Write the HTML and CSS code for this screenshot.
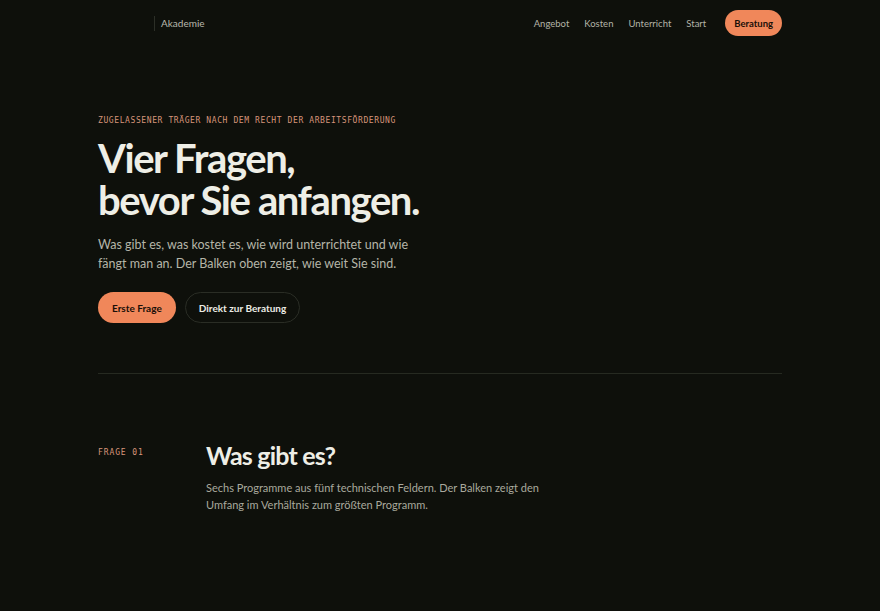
FILE: index.html
```html
<!DOCTYPE html>
<html lang="de">
<head>
<meta charset="utf-8">
<title>Akademie</title>
<link rel="stylesheet" href="styles.css">
</head>
<body>
<div class="page">
  <header class="nav">
    <div class="brand">
      <span class="brand-mark"></span>
      <span class="brand-sep"></span>
      <span class="brand-name">Akademie</span>
    </div>
    <nav class="links">
      <a href="#">Angebot</a>
      <a href="#">Kosten</a>
      <a href="#">Unterricht</a>
      <a href="#">Start</a>
      <a href="#" class="cta">Beratung</a>
    </nav>
  </header>

  <section class="hero">
    <p class="eyebrow">ZUGELASSENER TRÄGER NACH DEM RECHT DER ARBEITSFÖRDERUNG</p>
    <h1 class="title">Vier Fragen,<br>bevor Sie anfangen.</h1>
    <p class="lead">Was gibt es, was kostet es, wie wird unterrichtet und wie fängt man an. Der Balken oben zeigt, wie weit Sie sind.</p>
    <div class="actions">
      <a href="#" class="btn btn-primary">Erste Frage</a>
      <a href="#" class="btn btn-ghost">Direkt zur Beratung</a>
    </div>
  </section>

  <hr class="rule">

  <section class="question">
    <div class="q-label">FRAGE 01</div>
    <div class="q-body">
      <h2 class="q-title">Was gibt es?</h2>
      <p class="q-text">Sechs Programme aus fünf technischen Feldern. Der Balken zeigt den Umfang im Verhältnis zum größten Programm.</p>
    </div>
  </section>
</div>
</body>
</html>
```

FILE: styles.css
```css
* { box-sizing: border-box; }
html, body { margin: 0; padding: 0; }
body {
  background: #0e100b;
  color: #eeeee6;
  font-family: Lato, "Noto Sans", sans-serif;
  width: 880px;
  height: 611px;
  overflow: hidden;
}
a { text-decoration: none; color: inherit; }
.page {
  width: 684px;
  margin: 0 auto;
}
.nav {
  height: 46px;
  display: flex;
  align-items: center;
  justify-content: space-between;
}
.brand {
  display: flex;
  align-items: center;
}
.brand-mark {
  width: 56px;
  height: 14px;
}
.brand-sep {
  width: 1px;
  height: 15px;
  background: #2c2f27;
  margin-right: 6px;
}
.brand-name {
  font-size: 10px;
  font-weight: 400;
  color: #b9b9ad;
}
.links {
  display: flex;
  align-items: center;
  gap: 15px;
  font-size: 9.5px;
  color: #b3b3a7;
}
.links .cta {
  margin-left: 4px;
  background: #f0875a;
  color: #1a0f08;
  font-weight: 700;
  height: 26px;
  padding: 0 9px;
  border-radius: 13px;
  display: flex;
  align-items: center;
}
.hero {
  padding-top: 69px;
  padding-bottom: 50px;
}
.eyebrow {
  margin: 0;
  font-family: "DejaVu Sans Mono", "Liberation Mono", monospace;
  font-size: 8px;
  letter-spacing: 0.6px;
  color: #d7957a;
  line-height: 12px;
}
.title {
  margin: 10px 0 0;
  font-family: Lato, "Noto Sans", sans-serif;
  font-weight: 700;
  font-size: 40px;
  line-height: 42px;
  letter-spacing: -1.4px;
  color: #eeeee6;
}
.lead {
  margin: 14px 0 0;
  width: 315px;
  font-size: 12.5px;
  line-height: 19px;
  color: #b5b5a8;
}
.actions {
  margin-top: 19px;
  display: flex;
  gap: 9px;
}
.btn {
  height: 31px;
  border-radius: 16px;
  display: flex;
  align-items: center;
  font-size: 10px;
  font-weight: 700;
}
.btn-primary {
  background: #f0875a;
  color: #1a0f08;
  padding: 0 14px;
}
.btn-ghost {
  border: 1px solid #2a2d25;
  color: #ecece4;
  padding: 0 13px;
}
.rule {
  margin: 0;
  border: 0;
  height: 1px;
  background: #262a21;
}
.question {
  display: flex;
  padding-top: 65px;
}
.q-label {
  width: 108px;
  font-family: "DejaVu Sans Mono", "Liberation Mono", monospace;
  font-size: 8px;
  letter-spacing: 0.9px;
  color: #d7957a;
  padding-top: 9px;
}
.q-title {
  margin: 0;
  font-family: Lato, "Noto Sans", sans-serif;
  font-weight: 700;
  font-size: 25px;
  line-height: 32px;
  letter-spacing: -0.8px;
  color: #eeeee6;
}
.q-text {
  margin: 8px 0 0;
  width: 340px;
  font-size: 11px;
  line-height: 17px;
  color: #a9a99d;
}
```
